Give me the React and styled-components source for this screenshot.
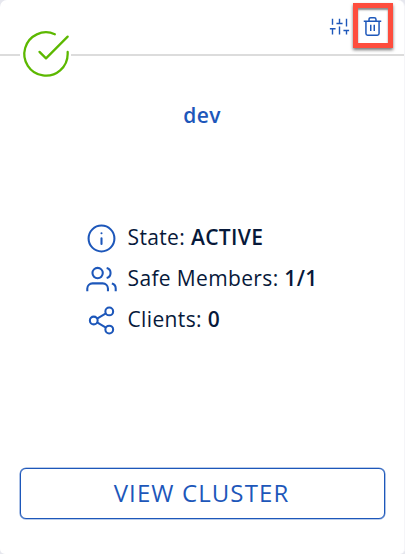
import React from "react";
import styled, { createGlobalStyle } from "styled-components";

const GlobalStyle = createGlobalStyle`
  * { box-sizing: border-box; }
  body { margin: 0; background: #e6e7ee; font-family: "Open Sans", sans-serif; }
`;

const Card = styled.main`
  display: flex;
  flex-direction: column;
  width: 405px;
  height: 554px;
  background: #fff;
  border-radius: 7px 7px 5px 5px;
  border-right: 1px solid #f5f5f8;
`;

const Header = styled.header`
  position: relative;
  height: 56px;
  flex: none;
  display: flex;
  justify-content: flex-end;
  border-bottom: 2px solid #dcdcdc;
`;

const StatusBadge = styled.span`
  position: absolute;
  left: 20px;
  top: 28px;
  width: 51px;
  height: 52px;
  display: flex;
  justify-content: center;
  background: #fff;
  color: #5cb800;
`;

const IconButton = styled.button`
  width: ${(p) => (p.$marked ? "40px" : "21px")};
  height: ${(p) => (p.$marked ? "45px" : "21px")};
  margin: ${(p) => (p.$marked ? "3px 11px 0 3px" : "16px 0 0")};
  padding: ${(p) => (p.$marked ? "2px 1px 0 0" : "0")};
  display: flex;
  align-items: center;
  justify-content: center;
  background: #fff;
  color: #1d57ba;
  border: ${(p) => (p.$marked ? "5px solid #fe4d3d" : "0")};
  box-shadow: ${(p) => (p.$marked ? "0 2px 3px #0008, inset 0 2px 2px #0007" : "none")};
`;

const Svg = styled.svg`
  display: block;
  flex: none;
  fill: none;
  stroke: currentColor;
  stroke-linejoin: round;
`;

const Title = styled.h1`
  margin: 45px 0 0;
  height: 28px;
  line-height: 28px;
  font-size: 21px;
  font-weight: 650;
  letter-spacing: 0.4px;
  text-align: center;
  color: #1d57ba;
`;

const Details = styled.ul`
  list-style: none;
  margin: 88.5px 0 0 86px;
  padding: 0;
`;

const Detail = styled.li`
  height: 41px;
  display: flex;
  align-items: center;
  gap: 10.5px;
  color: #1d57ba;
`;

const Label = styled.span`
  color: #07193a;
  font-size: 21px;
  line-height: 28px;
  letter-spacing: 0.36px;
  white-space: nowrap;
  margin-top: -3px;
  b { font-weight: 600; }
`;

const ViewButton = styled.button`
  margin: auto 19px 35px 20px;
  height: 51px;
  flex: none;
  padding: 0 2px 2px 0;
  border: 1px solid #1d57ba;
  border-radius: 6px;
  box-shadow: 0 0 0 0.6px #1d57ba99;
  background: #fff;
  color: #1d57ba;
  font: 400 24px/47px "Open Sans", sans-serif;
  letter-spacing: 1.1px;
`;

function Icon({ size, weight = 1.6, children }) {
  return (
    <Svg width={size} height={size} viewBox="0 0 24 24" strokeWidth={weight}>
      {children}
    </Svg>
  );
}

export default function App() {
  return (
    <>
      <GlobalStyle />
      <Card>
        <Header>
          <StatusBadge>
            <Icon size={52} weight={1.05}>
              <path strokeLinecap="round" d="M22 11.08V12a10 10 0 1 1-5.93-9.14M22 4 12 14.01l-3-3" />
            </Icon>
          </StatusBadge>
          <IconButton aria-label="Settings">
            <Icon size={21}>
              <path d="M4 21v-7M4 10V3M12 21v-9M12 8V3M20 21v-5M20 12V3M1 14.5h6.5M8.5 8.5h7M16.5 16.5h6.5" />
            </Icon>
          </IconButton>
          <IconButton $marked aria-label="Delete">
            <Icon size={21} weight={1.7}>
              <path d="M2 6h20M19.5 6v14a2 2 0 0 1-2 2h-11a2 2 0 0 1-2-2V6M8 6V4a2 2 0 0 1 2-2h4a2 2 0 0 1 2 2v2M10 10v7M14 10v7" />
            </Icon>
          </IconButton>
        </Header>
        <Title>dev</Title>
        <Details>
          <Detail>
            <Icon size={31}>
              <circle cx="12" cy="12" r="10" />
              <path strokeLinecap="round" d="M12 16.2v-4.4M12 8h.01" />
            </Icon>
            <Label>State: <b>ACTIVE</b></Label>
          </Detail>
          <Detail>
            <Icon size={31}>
              <path d="M17 21v-2a4 4 0 0 0-4-4H5a4 4 0 0 0-4 4v2M23 21v-2a4 4 0 0 0-3-3.87M16 3.13a4 4 0 0 1 0 7.75" />
              <circle cx="9" cy="7" r="4" />
            </Icon>
            <Label>Safe Members: <b>1/1</b></Label>
          </Detail>
          <Detail>
            <Icon size={31}>
              <circle cx="18" cy="5" r="3" />
              <circle cx="6" cy="12" r="3" />
              <circle cx="18" cy="19" r="3" />
              <path d="m8.59 13.51 6.83 3.98M15.41 6.51l-6.82 3.98" />
            </Icon>
            <Label>Clients: <b>0</b></Label>
          </Detail>
        </Details>
        <ViewButton>VIEW CLUSTER</ViewButton>
      </Card>
    </>
  );
}
